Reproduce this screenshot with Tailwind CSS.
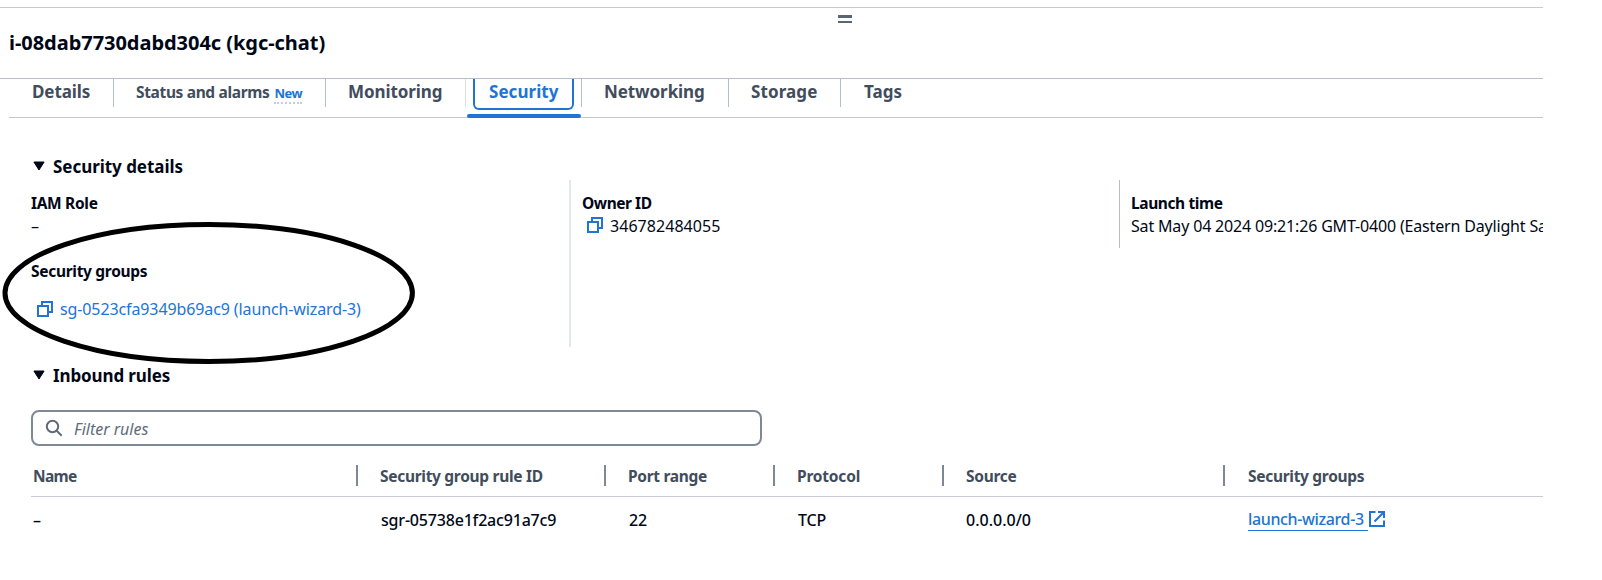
<!DOCTYPE html>
<html lang="en">
<head>
<meta charset="utf-8">
<title>Instance security</title>
<script src="https://cdn.jsdelivr.net/npm/@tailwindcss/browser@4"></script>
</head>
<body class="bg-white">
<div class="relative w-[1543px] h-[580px] overflow-hidden whitespace-nowrap bg-white font-['Noto_Sans',sans-serif] text-base leading-6 text-[#000716]">
  <header class="mt-[7px] h-[71px] border-t border-[#c9c9c9]">
    <div class="flex flex-col gap-[3px] pt-[7px] pl-[838px]">
      <div class="h-[2.5px] w-[14px] bg-[#5a6675]"></div>
      <div class="h-[2.5px] w-[14px] bg-[#5a6675]"></div>
    </div>
    <h1 class="mt-[6px] pl-[9px] text-[20px] leading-7 font-bold tracking-[-0.04px]">i-08dab7730dabd304c (kgc-chat)</h1>
  </header>
  <nav class="h-[40px] border-t border-[#b6bec9]">
    <div class="ml-[9px] flex h-[39px] border-b border-[#c6c6cd] text-[17px] font-bold text-[#414d5c]">
      <div class="flex h-[28px] w-[105px] items-center border-r border-[#b6bec9] pl-[23px] pb-[2px] tracking-[-0.08px]">Details</div>
      <div class="flex h-[28px] w-[212px] items-center border-r border-[#b6bec9] pl-[22px] pb-[2px] text-[15.5px]"><span class="tracking-[-0.35px]">Status and alarms</span><span class="ml-[5px] mt-[4px] border-b-2 border-dotted border-[#c8ccd2] text-[13px] leading-[18px] tracking-[-0.5px] text-[#2074d5]">New</span></div>
      <div class="flex h-[28px] w-[140px] items-center border-r border-[#d9dfe6] pl-[22px] pb-[2px] tracking-[-0.08px]">Monitoring</div>
      <div class="flex h-[38px] w-[115px] flex-col pl-[7px] text-[#2074d5]">
        <div class="flex h-[31px] w-[101px] shrink-0 items-center rounded-b-[6px] border-x-2 border-b-2 border-[#2074d5] pl-[14px] pb-[3px] tracking-[0.05px]">Security</div>
        <div class="mt-[4px] ml-[-6px] h-[4px] w-[114px] shrink-0 rounded-[2px] bg-[#2074d5]"></div>
      </div>
      <div class="flex h-[28px] w-[148px] items-center border-x border-[#b6bec9] pl-[22px] pb-[2px] tracking-[-0.08px]">Networking</div>
      <div class="flex h-[28px] w-[112px] items-center border-r border-[#b6bec9] pl-[22px] pb-[2px] tracking-[0.1px]">Storage</div>
      <div class="flex h-[28px] items-center pl-[23px] pb-[2px]">Tags</div>
    </div>
  </nav>
  <section>
    <h2 class="mt-[37px] flex h-[24px] items-center pl-[33px] text-[17px] font-bold">
      <svg class="mr-[8px] mb-[2px] h-[10px] w-[12px]" viewBox="0 0 12 10"><path d="M.9 1h10.200L6 9z" fill="#000716" stroke="#000716" stroke-linejoin="round"/></svg><span class="tracking-[-0.04px]">Security details</span>
    </h2>
    <div class="mt-[1px] flex">
      <div class="h-[167px] w-[571px] shrink-0 border-r-2 border-[#e3e8ee] pt-[11px] pl-[31px]">
        <div class="font-bold text-[15.5px] tracking-[-0.32px]">IAM Role</div>
        <div class="mt-[-1px]">–</div>
        <div class="mt-[21px] font-bold text-[15.5px] tracking-[-0.3px]">Security groups</div>
        <div class="mt-[14px] flex items-center pl-[6px] text-[#2074d5]">
          <svg class="mr-[7px] mb-[1px] h-[16px] w-[16px]" viewBox="0 0 16 16" fill="none" stroke="currentColor" stroke-width="2"><path d="M1 5h10v10H1zM5 4.500V1h10v10h-3.500"/></svg><span class="tracking-[-0.11px]">sg-0523cfa9349b69ac9 (launch-wizard-3)</span>
        </div>
      </div>
      <div class="h-[68px] w-[549px] shrink-0 border-r border-[#b6bec9] pt-[11px] pl-[11px]">
        <div class="font-bold text-[15.5px] tracking-[-0.45px]">Owner ID</div>
        <div class="mt-[-1px] flex items-center pl-[5px]">
          <svg class="mr-[7px] mb-[2px] h-[16px] w-[16px] text-[#2074d5]" viewBox="0 0 16 16" fill="none" stroke="currentColor" stroke-width="2"><path d="M1 5h10v10H1zM5 4.500V1h10v10h-3.500"/></svg><span class="tracking-[0.05px]">346782484055</span>
        </div>
      </div>
      <div class="h-[68px] pt-[11px] pl-[11px]">
        <div class="font-bold text-[15.5px] tracking-[-0.4px]">Launch time</div>
        <div class="mt-[-1px] tracking-[-0.17px]">Sat May 04 2024 09:21:26 GMT-0400 (Eastern Daylight Savings Time)</div>
      </div>
    </div>
  </section>
  <section>
    <h2 class="mt-[17px] flex h-[24px] items-center pl-[33px] text-[17px] font-bold">
      <svg class="mr-[8px] mb-[2px] h-[10px] w-[12px]" viewBox="0 0 12 10"><path d="M.9 1h10.200L6 9z" fill="#000716" stroke="#000716" stroke-linejoin="round"/></svg><span class="tracking-[-0.12px]">Inbound rules</span>
    </h2>
    <div class="mt-[22px] ml-[31px] flex h-[36px] w-[731px] items-center rounded-[8px] border-2 border-[#7d8998] pl-[12px] text-[#5f6b7a]">
      <svg class="mr-[11px] h-[18px] w-[18px]" viewBox="0 0 18 18" fill="none" stroke="currentColor" stroke-width="2"><circle cx="7.500" cy="7.500" r="5.700"/><path d="m11.700 11.700 5 5"/></svg><span class="mt-[1px] italic">Filter rules</span>
    </div>
    <div class="ml-[31px] flex h-[51px] border-b border-[#c9cbd0] pt-[19px] font-bold text-[15.5px] tracking-[-0.3px] text-[#414d5c]">
      <div class="flex h-[21px] w-[327px] items-center border-r-2 border-[#7d8998] pl-[2px] tracking-[-0.7px]">Name</div>
      <div class="flex h-[21px] w-[248px] items-center border-r-2 border-[#7d8998] pl-[22px]">Security group rule ID</div>
      <div class="flex h-[21px] w-[169px] items-center border-r-2 border-[#7d8998] pl-[22px]">Port range</div>
      <div class="flex h-[21px] w-[169px] items-center border-r-2 border-[#7d8998] pl-[22px] tracking-[-0.2px]">Protocol</div>
      <div class="flex h-[21px] w-[281px] items-center border-r-2 border-[#7d8998] pl-[22px]">Source</div>
      <div class="flex h-[21px] items-center pl-[23px]">Security groups</div>
    </div>
    <div class="ml-[31px] flex h-[45px] items-center font-medium">
      <div class="w-[350px] pl-[2px]">–</div>
      <div class="w-[248px] tracking-[-0.19px]">sgr-05738e1f2ac91a7c9</div>
      <div class="w-[169px] tracking-[-0.1px]">22</div>
      <div class="w-[168px] tracking-[-0.15px]">TCP</div>
      <div class="w-[282px]">0.0.0.0/0</div>
      <div class="flex items-center text-[#2074d5]"><span class="h-[23px] w-[120px] border-b-[1.500px] border-[#2074d5] leading-[23px] tracking-[-0.37px]">launch-wizard-3</span>
        <svg class="ml-[1px] mb-[2px] h-[16px] w-[16px]" viewBox="0 0 16 16" fill="none" stroke="currentColor" stroke-width="2"><path d="M6.500 1H1v14h14V9.500M9 1h6v6M15 1 5.500 10.500"/></svg>
      </div>
    </div>
  </section>
  <svg class="pointer-events-none absolute top-[220px] left-0 h-[147px] w-[420px]" viewBox="0 0 420 147"><ellipse cx="208.700" cy="73" rx="203.700" ry="68.500" fill="none" stroke="#000" stroke-width="5"/></svg>
</div>
</body>
</html>
